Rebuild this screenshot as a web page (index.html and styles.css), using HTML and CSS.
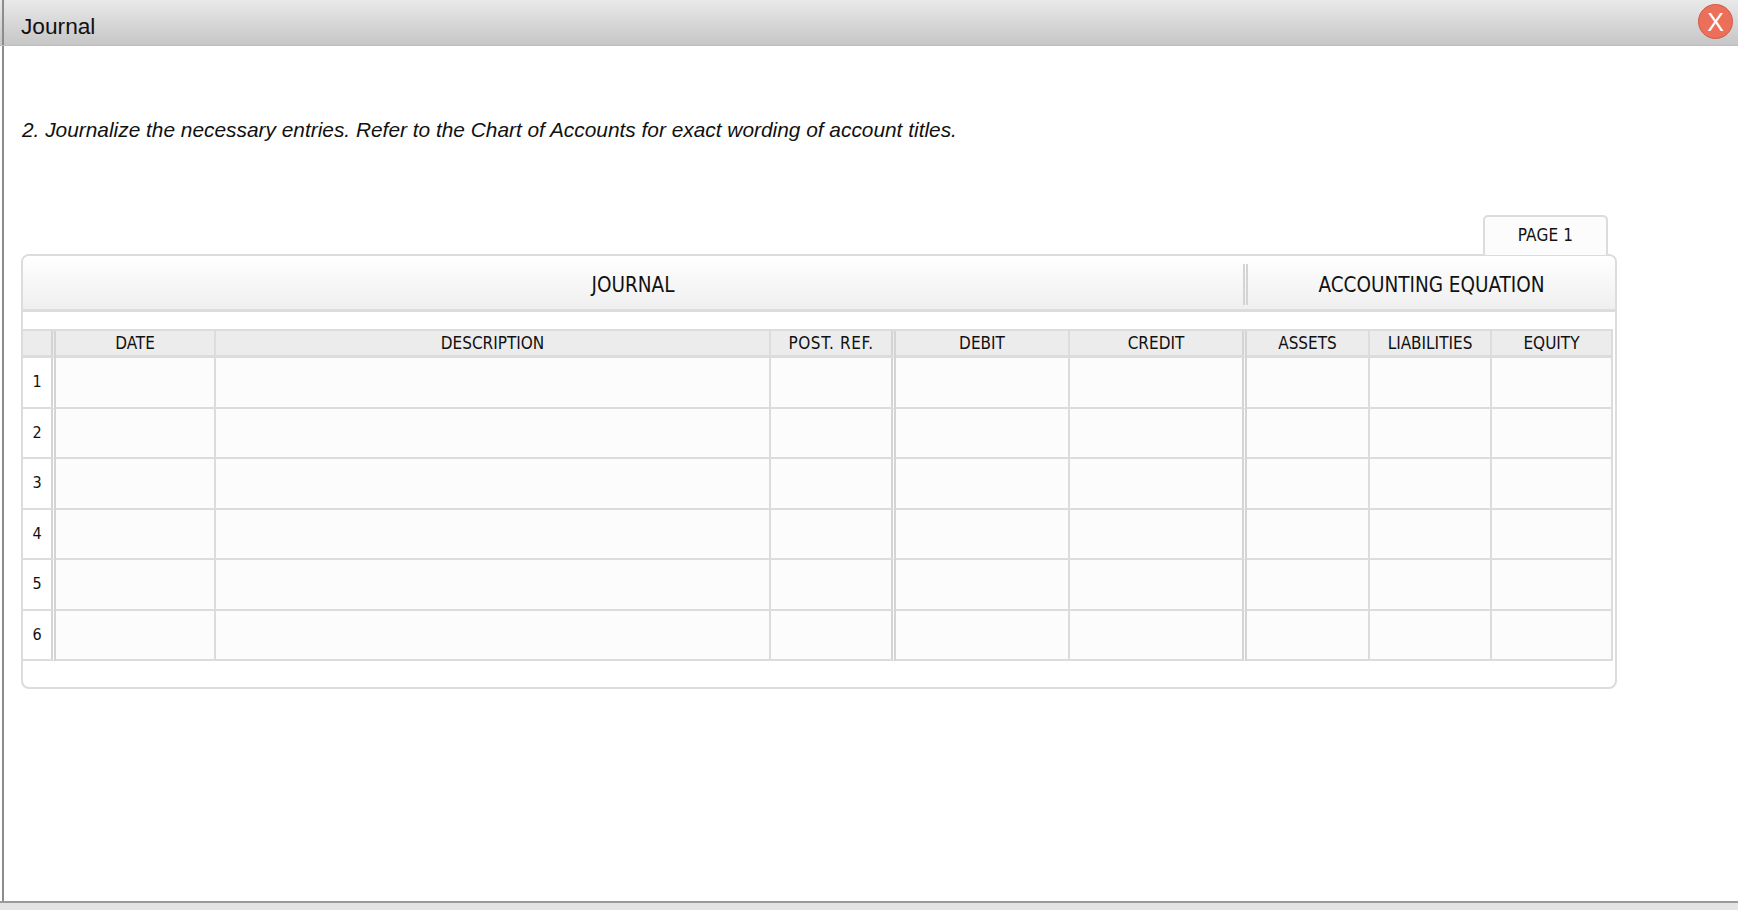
FILE: index.html
```html
<!DOCTYPE html>
<html lang="en">
<head>
<meta charset="utf-8">
<title>Journal</title>
<link rel="stylesheet" href="styles.css">
</head>
<body>
<div class="app">
  <header class="titlebar">
    <div class="titlebar-inner">
      <span class="title">Journal</span>
      <button class="close" type="button">X</button>
    </div>
  </header>
  <main class="content">
    <p class="instruction">2. Journalize the necessary entries. Refer to the Chart of Accounts for exact wording of account titles.</p>
    <div class="tabs"><div class="tab">PAGE 1</div></div>
    <section class="panel">
      <div class="panel-head">
        <div class="head-journal">JOURNAL</div>
        <div class="head-equation">ACCOUNTING EQUATION</div>
      </div>
      <div class="grid">
        <div class="cell hd num"></div>
        <div class="cell hd">DATE</div>
        <div class="cell hd">DESCRIPTION</div>
        <div class="cell hd dbl spaced">POST. REF.</div>
        <div class="cell hd">DEBIT</div>
        <div class="cell hd dbl">CREDIT</div>
        <div class="cell hd">ASSETS</div>
        <div class="cell hd">LIABILITIES</div>
        <div class="cell hd">EQUITY</div>

        <div class="cell num">1</div><div class="cell"></div><div class="cell"></div><div class="cell dbl"></div><div class="cell"></div><div class="cell dbl"></div><div class="cell"></div><div class="cell"></div><div class="cell"></div>
        <div class="cell num">2</div><div class="cell"></div><div class="cell"></div><div class="cell dbl"></div><div class="cell"></div><div class="cell dbl"></div><div class="cell"></div><div class="cell"></div><div class="cell"></div>
        <div class="cell num">3</div><div class="cell"></div><div class="cell"></div><div class="cell dbl"></div><div class="cell"></div><div class="cell dbl"></div><div class="cell"></div><div class="cell"></div><div class="cell"></div>
        <div class="cell num">4</div><div class="cell"></div><div class="cell"></div><div class="cell dbl"></div><div class="cell"></div><div class="cell dbl"></div><div class="cell"></div><div class="cell"></div><div class="cell"></div>
        <div class="cell num">5</div><div class="cell"></div><div class="cell"></div><div class="cell dbl"></div><div class="cell"></div><div class="cell dbl"></div><div class="cell"></div><div class="cell"></div><div class="cell"></div>
        <div class="cell num">6</div><div class="cell"></div><div class="cell"></div><div class="cell dbl"></div><div class="cell"></div><div class="cell dbl"></div><div class="cell"></div><div class="cell"></div><div class="cell"></div>
      </div>
    </section>
  </main>
  <footer class="footer"></footer>
</div>
</body>
</html>
```
FILE: styles.css
```css
* { box-sizing: border-box; }
html, body { margin: 0; height: 100%; background: #fff; }
body { overflow: hidden; font-family: "Liberation Sans", Arial, sans-serif; color: #111; }

.app { display: flex; flex-direction: column; height: 910px; }

.titlebar {
  flex: none;
  height: 46px;
  background: linear-gradient(#e9e9e9, #c6c6c6);
  border-bottom: 1px solid #bdbdbd;
}
.titlebar-inner {
  height: 100%;
  margin-left: 2px;
  border-left: 2px solid #8c8c8c;
  display: flex;
  align-items: flex-start;
  justify-content: space-between;
  padding: 0 5px 0 17px;
}
.title { font-size: 22.7px; line-height: 26px; margin-top: 13px; }
.close {
  width: 35px;
  height: 35px;
  margin-top: 4px;
  padding: 0;
  border: 1px solid #cf5a4c;
  border-radius: 50%;
  background: #ec6f5a;
  color: #fff;
  font-family: "Liberation Sans", Arial, sans-serif;
  font-size: 25px;
  line-height: 30px;
}

.content {
  flex: 1;
  margin-left: 2px;
  border-left: 2px solid #8c8c8c;
  padding: 71px 0 0 17px;
}
.instruction {
  margin: 0 0 0 1px;
  font-size: 20.86px;
  line-height: 26px;
  font-style: italic;
}

.tabs {
  display: flex;
  justify-content: flex-end;
  width: 1596px;
  padding-right: 9px;
  margin-top: 72px;
  margin-bottom: -1px;
  position: relative;
  z-index: 1;
}
.tab {
  width: 125px;
  height: 40px;
  border: 2px solid #dcdcdc;
  border-bottom: 0;
  border-radius: 5px 5px 0 0;
  background: #fcfcfc;
  text-align: center;
  font-family: "DejaVu Sans Condensed", "DejaVu Sans", sans-serif;
  font-size: 17px;
  letter-spacing: 0.2px;
  line-height: 37px;
}

.panel {
  width: 1596px;
  height: 435px;
  border: 2px solid #dcdcdc;
  border-radius: 8px;
  background: #fff;
  font-family: "DejaVu Sans Condensed", "DejaVu Sans", sans-serif;
}
.panel-head {
  display: flex;
  height: 56px;
  align-items: flex-start;
  background: linear-gradient(#fff, #efefef);
  border-bottom: 3px solid #dcdcdc;
  border-radius: 6px 6px 0 0;
  font-size: 20.5px;
}
.head-journal {
  width: 1220px;
  margin-top: 8px;
  line-height: 42px;
  text-align: center;
}
.head-equation {
  flex: 1;
  height: 41px;
  margin-top: 8px;
  line-height: 42px;
  text-align: center;
  border-left: 5px double #d4d4d4;
}

.grid {
  display: grid;
  width: 1590px;
  margin-top: 17px;
  border-top: 2px solid #dcdcdc;
  grid-template-columns: 33px 160px 555px 125px 174px 177px 123px 122px 121px;
  grid-template-rows: 27px repeat(6, 50.5px);
  font-size: 17px;
}
.cell {
  border-right: 2px solid #dcdcdc;
  border-bottom: 2px solid #dcdcdc;
  background: #fcfcfc;
}
.cell.hd {
  background: #ececec;
  text-align: center;
  border-bottom-width: 3px;
  line-height: 25px;
}
.cell.hd.spaced { letter-spacing: 0.6px; }
.cell.num {
  background: #fff;
  border-right: 5px double #d4d4d4;
  text-align: center;
  font-size: 16px;
  line-height: 48px;
}
.cell.hd.num { background: #ececec; }
.cell.dbl { border-right: 5px double #d4d4d4; }

.footer {
  flex: none;
  height: 9px;
  background: #e4e4e4;
  border-top: 2px solid #9a9a9a;
}
```
